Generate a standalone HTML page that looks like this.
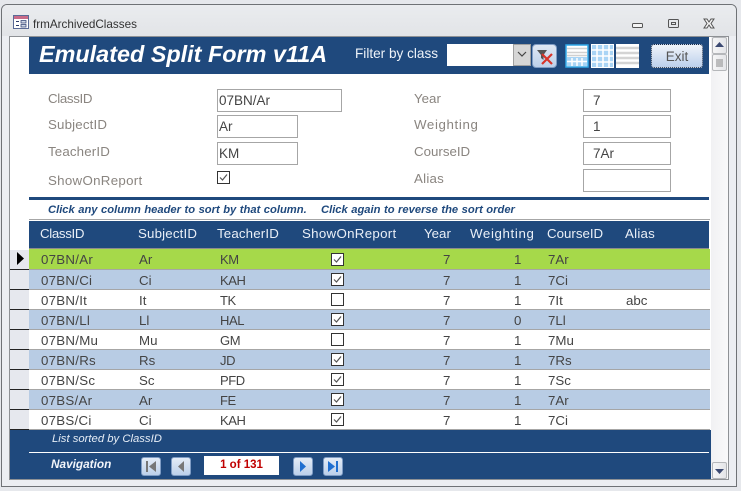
<!DOCTYPE html>
<html><head><meta charset="utf-8"><title>frmArchivedClasses</title>
<style>
html,body{margin:0;padding:0;width:741px;height:491px;overflow:hidden;background:#e6e8ec}
body{position:relative;font:13.3px/16px "Liberation Sans",sans-serif;color:#444}
.a,.r span,.h span{position:absolute;white-space:nowrap}
.win{position:absolute;left:1px;top:4px;width:736px;height:483px;box-sizing:border-box;border:1px solid #6f7276;border-radius:6px 6px 0 0;background:#eceef2}
.tb{position:absolute;left:2px;top:5px;width:734px;height:31px;border-radius:5px 5px 0 0;background:linear-gradient(#eaecef,#e2e4e7)}
.client{position:absolute;left:9px;top:36px;width:720px;height:444px;box-sizing:border-box;border:1px solid #8e9195;background:#fff}
.lbl{color:#8a8580;line-height:16px}
.in{position:absolute;box-sizing:border-box;border:1px solid #a6a6a6;background:#fff;height:23px;padding-left:1px;line-height:21px;color:#444;font-size:13.5px}
.r{position:absolute;left:29px;width:681px;height:20px;border-bottom:1px solid #a6a6a6;box-sizing:border-box;line-height:19px}
.sel{position:absolute;left:10px;width:19px;height:20px;background:#e6e8ee;border-bottom:1px solid #222;box-sizing:border-box}
.h span{color:#e9eff7;top:226px}
.r span{top:1px}
.r .c1{left:12px;letter-spacing:.25px}.r .c2{left:110px}.r .c3{left:191px;font-size:13px;letter-spacing:-.4px}.r .c5{left:414px}.r .c6{left:485px}.r .c7{left:519px}.r .c8{left:597px}
.g{background:#a6d94a}.b{background:#b8cce4}.w{background:#fff}
.ck{position:absolute;left:302px;top:3px;width:11px;height:11px;border:1px solid #333;background:#fff}
.ck svg{position:absolute;left:0;top:0}
.nb{position:absolute;top:457px;width:20px;height:19px;box-sizing:border-box;border:1px solid #7f9cc4;border-radius:3px;background:linear-gradient(#e4ecf6,#bcd0ea)}
.sb{position:absolute;left:712px;width:15px;box-sizing:border-box;border:1px solid #b5b7ba;border-radius:2px;background:linear-gradient(90deg,#f6f6f7,#e4e5e8)}
.t1{letter-spacing:-.35px}.t2{letter-spacing:.17px}.t3{letter-spacing:.15px}.t4{letter-spacing:.3px}.t6{letter-spacing:.62px}.t8{letter-spacing:.25px}
</style></head><body>
<div class="win"></div>
<div class="tb"></div>
<svg class="a" style="left:13px;top:15px" width="17" height="15"><rect x=".5" y=".5" width="15" height="13" fill="#fff" stroke="#5a6a96"/><rect x="1" y="1" width="14" height="3" fill="#c86a88"/><path d="M3 6.500h3M3 10.500h3" stroke="#2a3a6a"/><rect x="8" y="5.500" width="5" height="2.500" fill="#cfd8e8" stroke="#3a4a7a" stroke-width=".8"/><rect x="8" y="9.500" width="5" height="2.500" fill="#cfd8e8" stroke="#3a4a7a" stroke-width=".8"/></svg>
<div class="a" style="left:33px;top:17px;color:#333;font-size:11.700px">frmArchivedClasses</div>
<svg class="a" style="left:630px;top:15px" width="100" height="16" fill="none"><rect x="2.500" y="8.500" width="10" height="4" rx="1" stroke="#555" fill="#f4f4f4"/><rect x="38.500" y="4.500" width="10" height="8" rx="1" stroke="#555"/><rect x="41.500" y="7.500" width="4" height="2" stroke="#555"/><path d="M74 4h3l2 3 2-3h3l-3 4.500 3 4.500h-3l-2-3-2 3h-3l3-4.500z" stroke="#555" fill="#f4f4f4"/></svg>

<div class="client"></div>
<!-- header band -->
<div class="a" style="left:29px;top:37px;width:680px;height:37px;background:#1f497d"></div>
<div class="a" style="left:39px;top:40px;color:#fff;font:italic bold 23.400px/28px 'Liberation Sans',sans-serif">Emulated Split Form v11A</div>
<div class="a" style="left:355px;top:46px;color:#eef3f9;font-size:13.600px">Filter by class</div>
<div class="a" style="left:447px;top:44px;width:66px;height:22px;background:#fff"></div>
<div class="a" style="left:513px;top:44px;width:18px;height:22px;box-sizing:border-box;border:1px solid #a0a0a0;background:#d6d6d6"></div>
<svg class="a" style="left:516px;top:50px" width="12" height="9"><path d="M2 2l4 4 4-4" fill="none" stroke="#444" stroke-width="1.200"/></svg>
<div class="a" style="left:532px;top:44px;width:25px;height:24px;box-sizing:border-box;border:1px solid #7f9cc4;border-radius:4px;background:linear-gradient(#dfe8f4,#bed1ea)"></div>
<svg class="a" style="left:536px;top:48px" width="18" height="17"><path d="M1 2h10L7.500 7v5L5 10V7z" fill="#555"/><path d="M6 6l10 10M16 6L6 16" stroke="#d8352a" stroke-width="2.200"/></svg>
<svg class="a" style="left:565px;top:44px" width="76" height="24">
<rect x="1" y="1" width="22" height="22" fill="#fff" stroke="#30a8e8" stroke-width="1.500"/>
<path d="M2 4.500h20M2 8.500h20M2 11.500h20" stroke="#d0d0d0" stroke-width="1.500"/>
<rect x="2" y="13" width="20" height="9" fill="#a9d4f5"/><path d="M7 14v8M12 14v8M17 14v8M2 17.500h20" stroke="#fff" stroke-width="1.500"/>
<rect x="26" y="0" width="23" height="24" fill="#a9d4f5"/><path d="M32 0v24M38 0v24M44 0v24M26 6h23M26 12h23M26 18h23" stroke="#fff" stroke-width="1.600"/><rect x="26.500" y=".5" width="22" height="23" fill="none" stroke="#fff"/>
<rect x="51" y="0" width="23" height="24" fill="#fff"/><path d="M51 4h23M51 9h23M51 14h23M51 19h23" stroke="#d4d4d4" stroke-width="2.500"/>
</svg>
<div class="a" style="left:651px;top:44px;width:52px;height:24px;box-sizing:border-box;border:1px dotted #1a2a44;border-radius:3px;background:linear-gradient(#f0f4fa,#bcd0ec);text-align:center;line-height:23px;color:#555;font-size:13.500px">Exit</div>

<!-- form -->
<div class="a lbl t1" style="left:48px;top:91px">ClassID</div>
<div class="a lbl t2" style="left:48px;top:117px">SubjectID</div>
<div class="a lbl t3" style="left:48px;top:144px">TeacherID</div>
<div class="a lbl t4" style="left:48px;top:173px">ShowOnReport</div>
<div class="a lbl" style="left:414px;top:91px">Year</div>
<div class="a lbl t6" style="left:414px;top:117px">Weighting</div>
<div class="a lbl" style="left:414px;top:144px">CourseID</div>
<div class="a lbl t8" style="left:414px;top:171px">Alias</div>
<div class="in" style="left:217px;top:89px;width:125px">07BN/Ar</div>
<div class="in" style="left:217px;top:115px;width:81px">Ar</div>
<div class="in" style="left:217px;top:142px;width:81px">KM</div>
<div class="a" style="left:217px;top:171px;width:11px;height:11px;border:1px solid #333"><svg style="position:absolute;left:0;top:0" width="11" height="11"><path d="M2 5.500l2.500 2.500L9 2.500" fill="none" stroke="#555" stroke-width="1.200"/></svg></div>
<div class="in" style="left:583px;top:89px;width:88px;padding-left:9px">7</div>
<div class="in" style="left:583px;top:115px;width:88px;padding-left:9px">1</div>
<div class="in" style="left:583px;top:142px;width:88px;padding-left:9px">7Ar</div>
<div class="in" style="left:583px;top:169px;width:88px"></div>
<div class="a" style="left:29px;top:197px;width:680px;height:3px;background:#1f497d"></div>
<div class="a" style="left:48px;top:202px;color:#1f497d;font:italic bold 11.200px/16px 'Liberation Sans',sans-serif;word-spacing:.4px">Click any column header to sort by that column.</div>
<div class="a" style="left:321px;top:202px;color:#1f497d;font:italic bold 11.200px/16px 'Liberation Sans',sans-serif;word-spacing:.4px">Click again to reverse the sort order</div>
<div class="a" style="left:29px;top:219px;width:681px;height:1px;background:#a6a6a6"></div>

<!-- datasheet header -->
<div class="a" style="left:29px;top:221px;width:680px;height:28px;background:#1f497d;border-bottom:1px solid #8c8c8c;box-sizing:border-box"></div>
<div class="h">
<span class="t1" style="left:40px">ClassID</span><span class="t2" style="left:138px">SubjectID</span><span class="t3" style="left:217px">TeacherID</span><span class="t4" style="left:302px">ShowOnReport</span><span style="left:424px">Year</span><span class="t6" style="left:470px">Weighting</span><span style="left:547px">CourseID</span><span class="t8" style="left:625px">Alias</span>
</div>

<!-- selectors -->
<div class="sel" style="top:250px"></div><div class="sel" style="top:270px"></div><div class="sel" style="top:290px"></div><div class="sel" style="top:310px"></div><div class="sel" style="top:330px"></div><div class="sel" style="top:350px"></div><div class="sel" style="top:370px"></div><div class="sel" style="top:390px"></div><div class="sel" style="top:410px"></div>
<svg class="a" style="left:17px;top:252px" width="8" height="13"><path d="M0 0l7 6.500L0 13z" fill="#000"/></svg>

<!-- rows -->
<div class="r g" style="top:249px;height:21px"><span class="c1">07BN/Ar</span><span class="c2">Ar</span><span class="c3">KM</span><i class="ck" style="top:4px"><svg width="11" height="11"><path d="M2 5.500l2.500 2.500L9 2.500" fill="none" stroke="#555" stroke-width="1.200"/></svg></i><span class="c5">7</span><span class="c6">1</span><span class="c7">7Ar</span></div>
<div class="r b" style="top:270px"><span class="c1">07BN/Ci</span><span class="c2">Ci</span><span class="c3">KAH</span><i class="ck"><svg width="11" height="11"><path d="M2 5.500l2.500 2.500L9 2.500" fill="none" stroke="#555" stroke-width="1.200"/></svg></i><span class="c5">7</span><span class="c6">1</span><span class="c7">7Ci</span></div>
<div class="r w" style="top:290px"><span class="c1">07BN/It</span><span class="c2">It</span><span class="c3">TK</span><i class="ck"></i><span class="c5">7</span><span class="c6">1</span><span class="c7">7It</span><span class="c8">abc</span></div>
<div class="r b" style="top:310px"><span class="c1">07BN/Ll</span><span class="c2">Ll</span><span class="c3">HAL</span><i class="ck"><svg width="11" height="11"><path d="M2 5.500l2.500 2.500L9 2.500" fill="none" stroke="#555" stroke-width="1.200"/></svg></i><span class="c5">7</span><span class="c6">0</span><span class="c7">7Ll</span></div>
<div class="r w" style="top:330px"><span class="c1">07BN/Mu</span><span class="c2">Mu</span><span class="c3">GM</span><i class="ck"></i><span class="c5">7</span><span class="c6">1</span><span class="c7">7Mu</span></div>
<div class="r b" style="top:350px"><span class="c1">07BN/Rs</span><span class="c2">Rs</span><span class="c3">JD</span><i class="ck"><svg width="11" height="11"><path d="M2 5.500l2.500 2.500L9 2.500" fill="none" stroke="#555" stroke-width="1.200"/></svg></i><span class="c5">7</span><span class="c6">1</span><span class="c7">7Rs</span></div>
<div class="r w" style="top:370px"><span class="c1">07BN/Sc</span><span class="c2">Sc</span><span class="c3">PFD</span><i class="ck"><svg width="11" height="11"><path d="M2 5.500l2.500 2.500L9 2.500" fill="none" stroke="#555" stroke-width="1.200"/></svg></i><span class="c5">7</span><span class="c6">1</span><span class="c7">7Sc</span></div>
<div class="r b" style="top:390px"><span class="c1">07BS/Ar</span><span class="c2">Ar</span><span class="c3">FE</span><i class="ck"><svg width="11" height="11"><path d="M2 5.500l2.500 2.500L9 2.500" fill="none" stroke="#555" stroke-width="1.200"/></svg></i><span class="c5">7</span><span class="c6">1</span><span class="c7">7Ar</span></div>
<div class="r w" style="top:410px"><span class="c1">07BS/Ci</span><span class="c2">Ci</span><span class="c3">KAH</span><i class="ck"><svg width="11" height="11"><path d="M2 5.500l2.500 2.500L9 2.500" fill="none" stroke="#555" stroke-width="1.200"/></svg></i><span class="c5">7</span><span class="c6">1</span><span class="c7">7Ci</span></div>

<!-- footer -->
<div class="a" style="left:10px;top:430px;width:701px;height:49px;background:#1f497d"></div>
<div class="a" style="left:29px;top:452px;width:680px;height:1px;background:#fff"></div>
<div class="a" style="left:52px;top:431px;color:#e6edf6;font:italic 11.300px/16px 'Liberation Sans',sans-serif">List sorted by ClassID</div>
<div class="a" style="left:51px;top:456px;color:#f2f5fa;font:italic bold 11.800px/16px 'Liberation Sans',sans-serif">Navigation</div>
<div class="nb" style="left:141px"><svg width="18" height="17"><path d="M4 3h2v11H4zM14 3v11L7 8.500z" fill="#777"/></svg></div>
<div class="nb" style="left:171px"><svg width="18" height="17"><path d="M12 3v11L6 8.500z" fill="#777"/></svg></div>
<div class="a" style="left:204px;top:456px;width:75px;height:19px;background:#fff;color:#c00000;font:bold 11.500px/19px 'Liberation Sans',sans-serif;text-align:center">1 of 131</div>
<div class="nb" style="left:293px"><svg width="18" height="17"><path d="M6 3v11l6-5.500z" fill="#1f6fd0"/></svg></div>
<div class="nb" style="left:323px"><svg width="18" height="17"><path d="M4 3v11l7-5.500zM12 3h2v11h-2z" fill="#1f6fd0"/></svg></div>

<!-- scrollbar -->
<div class="a" style="left:711px;top:37px;width:17px;height:442px;background:linear-gradient(90deg,#f1f1f3,#f9f9fa)"></div>
<div class="sb" style="top:37px;height:17px"><svg width="13" height="15" style="position:absolute;left:0;top:0"><path d="M2 9l4.500-5L11 9z" fill="#3c4a72"/></svg></div>
<div class="sb" style="top:54px;height:17px"><svg width="13" height="15" style="position:absolute;left:0;top:0"><path d="M3 5h7M3 7h7M3 9h7M3 11h7" stroke="#888"/></svg></div>
<div class="sb" style="top:462px;height:17px"><svg width="13" height="15" style="position:absolute;left:0;top:0"><path d="M2 6h9L6.500 11z" fill="#3c4a72"/></svg></div>
</body></html>
